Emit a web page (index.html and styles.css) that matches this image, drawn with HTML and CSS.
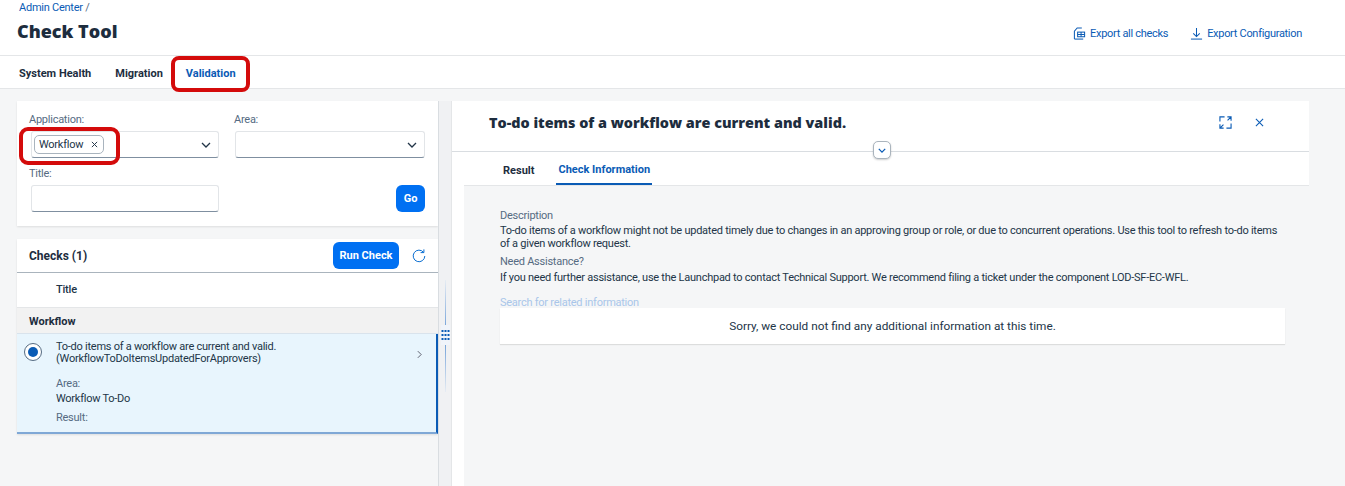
FILE: index.html
```html
<!DOCTYPE html>
<html lang="en">
<head>
<meta charset="utf-8">
<title>Check Tool</title>
<link rel="stylesheet" href="styles.css">
</head>
<body>
<header class="top">
  <div class="top-left">
    <a class="crumb">Admin Center <span class="slash">/</span></a>
    <h1>Check Tool</h1>
  </div>
  <div class="top-actions">
    <a class="action">
      <svg class="ico" viewBox="0 0 14 14" fill="none" stroke="currentColor" stroke-width="1.1"><path d="M1.5 13V4.5L4.5 1H9.5"/><path d="M1.5 13H11"/><rect x="5" y="5.5" width="7.5" height="5"/><path d="M5 8H12.5M8.7 5.5V10.5"/></svg>
      Export all checks</a>
    <a class="action">
      <svg class="ico" viewBox="0 0 14 14" fill="none" stroke="currentColor" stroke-width="1.1"><path d="M7 1V10M3.5 6.8L7 10.3L10.5 6.8"/><path d="M1 13H13"/></svg>
      Export Configuration</a>
  </div>
</header>
<nav class="tabs">
  <span class="tab">System Health</span>
  <span class="tab">Migration</span>
  <span class="tab active">Validation</span>
  <span class="mark mark-tab"></span>
</nav>
<main class="layout">
  <section class="left">
    <div class="card filter">
      <div class="filter-grid">
        <div class="field">
          <label>Application:</label>
          <div class="input">
            <span class="token">Workflow <svg class="x" viewBox="0 0 8 8"><path d="M1 1L7 7M7 1L1 7"/></svg></span>
            <svg class="chev" viewBox="0 0 10 6"><path d="M1 1L5 5L9 1"/></svg>
          </div>
          <span class="mark mark-token"></span>
        </div>
        <div class="field">
          <label>Area:</label>
          <div class="input">
            <svg class="chev" viewBox="0 0 10 6"><path d="M1 1L5 5L9 1"/></svg>
          </div>
        </div>
        <div class="field">
          <label>Title:</label>
          <div class="input"></div>
        </div>
        <div class="go-cell"><button class="btn go">Go</button></div>
      </div>
    </div>
    <div class="card checks">
      <div class="checks-head">
        <h2>Checks (1)</h2>
        <button class="btn run">Run Check</button>
        <svg class="refresh" viewBox="0 0 14 14" fill="none" stroke="#0a6ed1" stroke-width="1"><path d="M11.6 3.4A5.8 5.8 0 1 0 12.8 7"/><path d="M8.6 3.6H11.9V0.4"/></svg>
      </div>
      <div class="col-head">Title</div>
      <div class="group">Workflow</div>
      <div class="row">
        <span class="radio"><span class="dot"></span></span>
        <div class="row-body">
          <p>To-do items of a workflow are current and valid.<br>(WorkflowToDoItemsUpdatedForApprovers)</p>
          <div class="lbl first">Area:</div>
          <div class="val">Workflow To-Do</div>
          <div class="lbl">Result:</div>
        </div>
        <svg class="nav" viewBox="0 0 6 10"><path d="M1 1L5 5L1 9"/></svg>
      </div>
    </div>
  </section>
  <div class="split">
    <span class="split-line"></span>
    <svg class="grip" viewBox="0 0 8 12"><g fill="#0a5bb5"><rect x="0" y="1" width="2" height="2"/><rect x="3" y="1" width="2" height="2"/><rect x="6" y="1" width="2" height="2"/><rect x="0" y="5" width="2" height="2"/><rect x="3" y="5" width="2" height="2"/><rect x="6" y="5" width="2" height="2"/><rect x="0" y="9" width="2" height="2"/><rect x="3" y="9" width="2" height="2"/><rect x="6" y="9" width="2" height="2"/></g></svg>
  </div>
  <section class="right">
    <div class="detail-head">
      <h2>To-do items of a workflow are current and valid.</h2>
      <div class="detail-icons">
        <svg class="dico" viewBox="0 0 14 14" fill="none" stroke="#0a5bb5" stroke-width="1.2"><path d="M1 6V1H6"/><path d="M13 8V13H8"/><path d="M9 1H13V5M13 1L9.2 4.8"/><path d="M1 9V13H5M1 13L4.8 9.2"/></svg>
        <svg class="dico close" viewBox="0 0 10 10" fill="none" stroke="#0a5bb5" stroke-width="1.2"><path d="M1 1L9 9M9 1L1 9"/></svg>
      </div>
      <span class="collapse"><svg viewBox="0 0 10 6"><path d="M1 1L5 5L9 1"/></svg></span>
    </div>
    <div class="detail-tabs">
      <span class="dtab">Result</span>
      <span class="dtab active">Check Information</span>
    </div>
    <div class="detail-body">
      <div class="dlabel">Description</div>
      <p class="dtext">To-do items of a workflow might not be updated timely due to changes in an approving group or role, or due to concurrent operations. Use this tool to refresh to-do items of a given workflow request.</p>
      <div class="dlabel need">Need Assistance?</div>
      <p class="dtext">If you need further assistance, use the Launchpad to contact Technical Support. We recommend filing a ticket under the component LOD-SF-EC-WFL.</p>
      <div class="search">Search for related information</div>
      <div class="none">Sorry, we could not find any additional information at this time.</div>
    </div>
  </section>
</main>
</body>
</html>
```
FILE: styles.css
```css
* { box-sizing: border-box; }
html, body { margin: 0; height: 486px; overflow: hidden; }
body {
  background: #f5f6f7;
  color: #223548;
  font-family: Roboto, "Liberation Sans", sans-serif;
  font-size: 11px;
  display: flex;
  flex-direction: column;
}
p, h1, h2 { margin: 0; }

.top {
  height: 56px;
  background: #fff;
  display: flex;
  justify-content: space-between;
  padding: 0 43px 0 17px;
  border-bottom: 1px solid #e4e6e8;
  box-shadow: 0 1px 2px rgba(0,0,0,.06);
  position: relative;
}
.crumb { display: block; color: #0a5bb5; font-size: 11px; letter-spacing: -.25px; line-height: 14px; padding: 1px 0 0 2px; }
.slash { color: #556b82; }
.top h1 { font-family: "Open Sans", sans-serif; font-size: 18px; font-weight: 800; line-height: 24px; margin-top: 4px; color: #1d2d3e; }
.top-actions { display: flex; gap: 22px; align-items: center; padding-top: 11px; }
.action { display: flex; align-items: center; gap: 4px; color: #0a5bb5; font-size: 11px; letter-spacing: -.3px; }
.ico { width: 13px; height: 13px; }

.tabs {
  height: 33px;
  background: #fff;
  display: flex;
  align-items: center;
  padding: 3px 0 0 19px;
  gap: 24px;
  position: relative;
  border-bottom: 1px solid #e4e6e8;
}
.tab { font-weight: 700; font-size: 11px; color: #1d2d3e; }
.tab.active { color: #0a5bb5; margin-left: -1px; }
.mark {
  position: absolute;
  border: 4px solid #d40b0b;
  border-radius: 8px;
  pointer-events: none;
}
.mark-tab { left: 171px; top: 0; width: 79px; height: 36px; }

.layout { flex: 1; display: flex; padding-top: 12px; min-height: 0; }
.left { width: 421px; margin-left: 17px; display: flex; flex-direction: column; gap: 13px; }
.card { background: #fff; box-shadow: 0 1px 2px rgba(0,0,0,.1); }
.filter { height: 125px; padding: 12px 13px 0 14px; }
.filter-grid {
  display: grid;
  grid-template-columns: 188px 190px;
  row-gap: 9px;
  justify-content: space-between;
}
.field { position: relative; }
.field label { display: block; font-size: 11px; letter-spacing: -.25px; color: #556b82; line-height: 14px; margin: 0 0 4px -2px; }
.field:nth-child(2) label { margin-left: -1px; }
.input {
  height: 27px;
  background: #fff;
  border: 1px solid #e2e5e8;
  border-bottom-color: #7f8fa0;
  border-radius: 3px;
  display: flex;
  align-items: center;
  justify-content: space-between;
  padding: 0 7px 0 2px;
}
.token {
  display: inline-flex;
  align-items: center;
  justify-content: space-between;
  height: 19px;
  padding: 0 5px 0 4px;
  border: 1px solid #a9b4be;
  border-radius: 5px;
  font-size: 11px;
  letter-spacing: -.25px;
  color: #223548;
  width: 70px;
}
.x { width: 7px; height: 7px; stroke: #223548; stroke-width: 1.1; fill: none; }
.chev { width: 10px; height: 6px; margin-left: auto; stroke: #223548; stroke-width: 1.3; fill: none; }
.mark-token { left: -12px; top: 14px; width: 101px; height: 38px; border-radius: 9px; }
.go-cell { display: flex; justify-content: flex-end; align-items: flex-end; }
.btn {
  border: 0;
  background: #0070f2;
  color: #fff;
  font-family: inherit;
  font-weight: 700;
  font-size: 11px;
  border-radius: 6px;
  padding: 0;
}
.go { width: 29px; height: 27px; }

.checks { display: flex; flex-direction: column; }
.checks-head {
  height: 33px;
  display: flex;
  align-items: center;
  padding: 0 12px 0 12px;
  border-bottom: 1px solid #aab4bd;
  box-sizing: content-box;
}
.checks-head h2 { font-size: 12px; font-weight: 700; color: #1d2d3e; margin-right: auto; }
.run { width: 66px; height: 27px; margin-right: 13px; }
.refresh { width: 14px; height: 14px; }
.col-head {
  height: 35px;
  display: flex;
  align-items: center;
  padding: 0 0 2px 39px;
  font-size: 11px;
  font-weight: 500;
  letter-spacing: -.2px;
  border-bottom: 1px solid #e4e6e8;
  color: #223548;
}
.group {
  height: 26px;
  background: #f2f2f2;
  display: flex;
  align-items: center;
  padding: 1px 0 0 12px;
  font-weight: 700;
  font-size: 11px;
  color: #1d2d3e;
  border-bottom: 1px solid #d9e3ec;
}
.row {
  height: 100px;
  background: #e8f5fd;
  border-right: 2px solid #0a5bb5;
  border-bottom: 2px solid #7fa8d6;
  display: flex;
  padding: 7px 14px 0 7px;
  position: relative;
}
.radio {
  width: 18px;
  height: 18px;
  border-radius: 50%;
  background: #fff;
  border: 1px solid #556b82;
  display: flex;
  align-items: center;
  justify-content: center;
  margin-top: 2px;
  flex: none;
}
.dot { width: 10px; height: 10px; border-radius: 50%; background: #0a5bb5; }
.row-body { margin-left: 14px; flex: 1; font-size: 11px; letter-spacing: -.25px; line-height: 12px; color: #223548; }
.lbl { color: #556b82; line-height: 15px; margin-top: 4px; }
.lbl.first { margin-top: 11px; }
.val { line-height: 15px; }
.nav { width: 5px; height: 9px; margin-top: 9px; stroke: #445; stroke-width: 1; fill: none; }

.split {
  width: 14px;
  position: relative;
  border-left: 1px solid #d9dde1;
  border-right: 1px solid #e4e6e8;
  background: #f0f1f3;
}
.split-line {
  position: absolute;
  left: 6px;
  top: 179px;
  height: 112px;
  width: 1px;
  background: linear-gradient(#e6ecf3, #6f9fd8 45%, #6f9fd8 55%, #e6ecf3);
}
.grip {
  position: absolute;
  left: 2px;
  top: 224px;
  width: 9px;
  height: 20px;
  padding: 4px 0;
  background: #f0f4fa;
}

.right { width: 857px; display: flex; flex-direction: column; background: #fff; }
.detail-head {
  height: 51px;
  background: #fff;
  display: flex;
  align-items: center;
  justify-content: space-between;
  padding: 0 45px 7px 37px;
  border-bottom: 1px solid #d9dde1;
  position: relative;
}
.detail-head h2 { font-family: "Open Sans", sans-serif; font-size: 14.4px; font-weight: 800; color: #1d2d3e; }
.detail-icons { display: flex; align-items: center; gap: 23px; }
.dico { width: 13px; height: 13px; }
.dico.close { width: 9px; height: 9px; }
.collapse {
  position: absolute;
  left: 421px;
  bottom: -8px;
  width: 18px;
  height: 18px;
  background: #fff;
  border: 1px solid #aab4bd;
  border-radius: 5px;
  box-shadow: 0 1px 2px rgba(0,0,0,.2);
  display: flex;
  align-items: center;
  justify-content: center;
}
.collapse svg { width: 8px; height: 5px; stroke: #0a5bb5; stroke-width: 1.6; fill: none; }
.detail-tabs {
  height: 33px;
  background: #fff;
  display: flex;
  align-items: flex-end;
  padding-left: 51px;
  gap: 24px;
}
.dtab { height: 33px; display: flex; align-items: center; font-weight: 700; font-size: 11px; color: #1d2d3e; padding-top: 3px; }
.dtab.active { color: #0a5bb5; border-bottom: 2px solid #0a5bb5; padding: 3px 2px 0; margin-left: -2px; }
.detail-body {
  flex: 1;
  background: #f5f6f7;
  margin-left: 12px;
  padding: 22px 24px 0 36px;
  border-top: 1px solid #e4e6e8;
  font-size: 11px;
  letter-spacing: -.25px;
}
.dlabel { color: #556b82; line-height: 16px; }
.dlabel.need { margin-bottom: 1px; }
.dtext { line-height: 13px; margin: 0 0 4px; color: #223548; }
.search { color: #a9c6ea; line-height: 14px; margin-top: 12px; }
.none {
  height: 36px;
  background: #fff;
  display: flex;
  align-items: center;
  justify-content: center;
  box-shadow: 0 1px 1px rgba(0,0,0,.1);
  color: #223548;
  font-size: 11.8px;
  letter-spacing: 0;
  margin-top: -2px;
}
```
